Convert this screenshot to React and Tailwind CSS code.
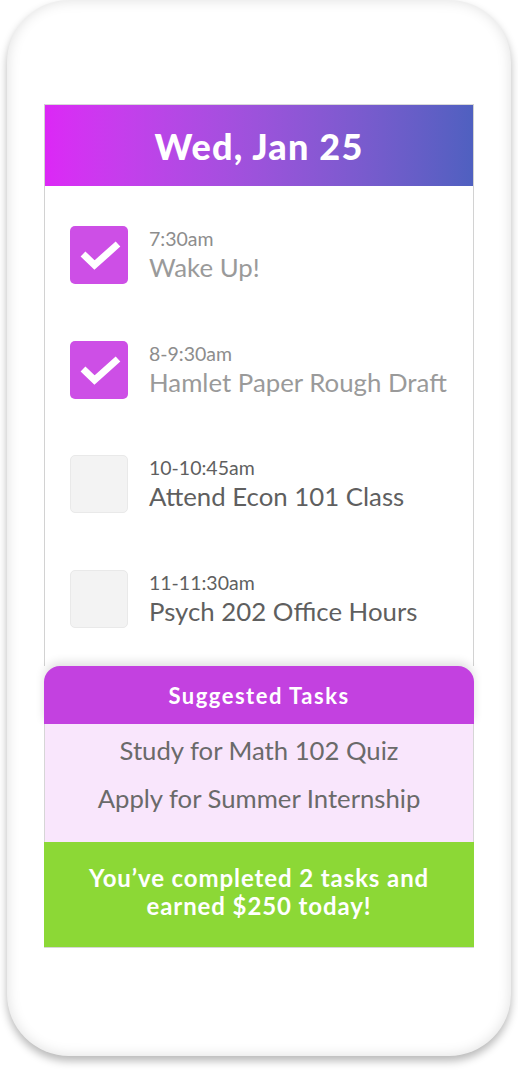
import React from "react";

const tasks = [
  { time: "7:30am", title: "Wake Up!", done: true },
  { time: "8-9:30am", title: "Hamlet Paper Rough Draft", done: true },
  { time: "10-10:45am", title: "Attend Econ 101 Class", done: false },
  { time: "11-11:30am", title: "Psych 202 Office Hours", done: false },
];

const suggested = ["Study for Math 102 Quiz", "Apply for Summer Internship"];

const lato = { fontFamily: "Lato, 'Open Sans', sans-serif" };

const CheckBox = ({ done }) =>
  done ? (
    <div className="w-[58px] h-[58px] shrink-0 rounded-[5px] bg-[#cd4fe6] flex items-center justify-center">
      <svg width="58" height="58" viewBox="0 0 58 58">
        <polyline
          points="13,28 24.5,39 48,18"
          fill="none"
          stroke="#fff"
          strokeWidth="7"
        />
      </svg>
    </div>
  ) : (
    <div className="w-[58px] h-[58px] shrink-0 rounded-[5px] bg-[#f3f3f3] border border-[#e9e9e9]" />
  );

const App = () => {
  return (
    <div className="min-h-screen bg-white pt-0" style={lato}>
      {/* PHONE */}
      <div className="ml-[7px] w-[504px] h-[1056px] rounded-[62px] bg-white pt-[104px] px-[37px] shadow-[inset_0_0_14px_rgba(0,0,0,0.13),0_5px_8px_rgba(0,0,0,0.28)]">
        {/* SCREEN */}
        <div className="border-x border-[#d2d2d2]">
          <div className="h-[82px] bg-gradient-to-r from-[#dc27f6] to-[#4f60c0] flex items-center justify-center border-t border-[#d8d8d8]">
            <h1 className="text-white text-[36px] font-black tracking-[1.2px]">
              Wed, Jan 25
            </h1>
          </div>

          <div className="flex flex-col gap-[56.7px] pt-[40px] pb-[38px] px-[25px]">
            {tasks.map((t) => (
              <div key={t.time} className="flex items-start gap-[21px]">
                <CheckBox done={t.done} />
                <div className="pt-[2px]">
                  <div
                    className={`text-[19.5px] leading-[22px] ${
                      t.done ? "text-[#8d8d8d]" : "text-[#5f5f5f]"
                    }`}
                  >
                    {t.time}
                  </div>
                  <div
                    className={`text-[25.8px] leading-[34px] ${
                      t.done ? "text-[#9a9a9a]" : "text-[#5f5f5f]"
                    }`}
                  >
                    {t.title}
                  </div>
                </div>
              </div>
            ))}
          </div>
        </div>

        {/* SUGGESTED */}
        <div className="h-[58px] rounded-t-[16px] bg-[#c341e0] flex items-center justify-center shadow-[0_-4px_10px_rgba(0,0,0,0.12)]">
          <span className="text-white text-[22px] font-bold tracking-[1.5px]">
            Suggested Tasks
          </span>
        </div>
        <div className="h-[118px] bg-[#f9e6fc] border-x border-[#d6d6d6] pt-[2px] text-center">
          {suggested.map((s) => (
            <div key={s} className="text-[25.7px] leading-[48px] text-[#6a6a6a]">
              {s}
            </div>
          ))}
        </div>
        <div className="h-[106px] bg-[#8cd836] border-b border-[#d6d6d6] flex items-center justify-center pb-[6px] text-center">
          <p className="text-white text-[24px] font-bold leading-[28px] tracking-[0.9px]">
            You’ve completed 2 tasks and
            <br />
            earned $250 today!
          </p>
        </div>
      </div>
    </div>
  );
};

export default App;
